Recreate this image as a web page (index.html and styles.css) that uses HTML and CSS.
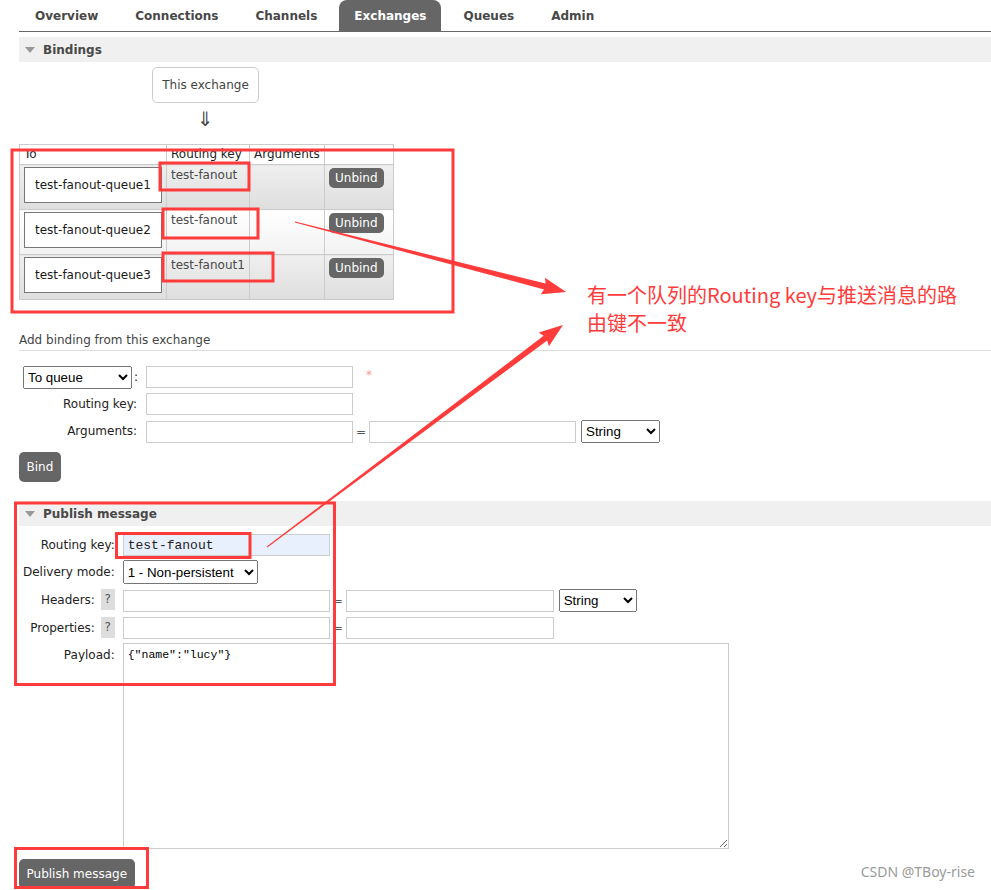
FILE: index.html
```html
<!DOCTYPE html>
<html>
<head>
<meta charset="utf-8">
<link rel="stylesheet" href="styles.css">
</head>
<body>
<div class="page">
  <ul class="tabs">
    <li><a>Overview</a></li>
    <li><a>Connections</a></li>
    <li><a>Channels</a></li>
    <li class="active"><a>Exchanges</a></li>
    <li><a>Queues</a></li>
    <li><a>Admin</a></li>
  </ul>

  <div class="section">
    <h2 class="section-head"><span class="tri"></span>Bindings</h2>
    <div class="this-ex">This exchange</div>
    <div class="down">⇓</div>
    <table class="bindings">
      <thead>
        <tr><th class="c1">To</th><th class="c2">Routing key</th><th class="c3">Arguments</th><th class="c4"></th></tr>
      </thead>
      <tbody>
        <tr class="alt1"><td><span class="queue">test-fanout-queue1</span></td><td class="rk">test-fanout</td><td></td><td><button class="small-btn">Unbind</button></td></tr>
        <tr class="alt2"><td><span class="queue">test-fanout-queue2</span></td><td class="rk">test-fanout</td><td></td><td><button class="small-btn">Unbind</button></td></tr>
        <tr class="alt1"><td><span class="queue">test-fanout-queue3</span></td><td class="rk">test-fanout1</td><td></td><td><button class="small-btn">Unbind</button></td></tr>
      </tbody>
    </table>

    <h3 class="sub">Add binding from this exchange</h3>
    <div class="form bind-form">
      <div class="lbl"><select class="sel-dest"><option>To queue</option></select>:</div>
      <div class="fld"><input type="text"><span class="req">*</span></div>
      <div class="lbl">Routing key:</div>
      <div class="fld"><input type="text"></div>
      <div class="lbl">Arguments:</div>
      <div class="fld"><input type="text"><span class="eq">=</span><input type="text"><select class="sel-type"><option>String</option></select></div>
    </div>
    <button class="btn">Bind</button>
  </div>

  <div class="section">
    <h2 class="section-head"><span class="tri"></span>Publish message</h2>
    <div class="form pub-form">
      <div class="lbl">Routing key:</div>
      <div class="fld"><input type="text" class="filled" value="test-fanout"></div>
      <div class="lbl">Delivery mode:</div>
      <div class="fld"><select class="sel-mode"><option>1 - Non-persistent</option></select></div>
      <div class="lbl">Headers: <span class="help">?</span></div>
      <div class="fld"><input type="text"><span class="eq">=</span><input type="text" class="wide"><select class="sel-type2"><option>String</option></select></div>
      <div class="lbl">Properties: <span class="help">?</span></div>
      <div class="fld"><input type="text"><span class="eq">=</span><input type="text" class="wide"></div>
      <div class="lbl top">Payload:</div>
      <div class="fld"><textarea class="payload">{"name":"lucy"}</textarea></div>
    </div>
    <button class="btn">Publish message</button>
  </div>
</div>

<svg class="marks" width="991" height="890" viewBox="0 0 991 890">
  <g fill="none" stroke="#ff3b3b" stroke-width="3">
    <rect x="12" y="150" width="441" height="162"/>
    <rect x="160" y="163" width="89" height="27"/>
    <rect x="163" y="209" width="95" height="29"/>
    <rect x="163" y="253" width="110" height="28"/>
    <rect x="15.5" y="503" width="319" height="181.5"/>
    <rect x="116.5" y="533.5" width="133.5" height="24"/>
    <rect x="15.5" y="848.5" width="132" height="39"/>
  </g>
  <g fill="#ff3b3b">
    <g transform="translate(295 222) rotate(14.48)">
      <polygon points="0,-0.5 258,-3 256,-8.5 280,0 256,8.5 258,3 0,0.5"/>
    </g>
    <g transform="translate(267 547) rotate(-36.87)">
      <polygon points="0,-0.5 348,-3 346,-8.5 370,0 346,8.5 348,3 0,0.5"/>
    </g>
  </g>
</svg>
<div class="note">有一个队列的Routing key与推送消息的路<br>由键不一致</div>
<div class="watermark">CSDN @TBoy-rise</div>
</body>
</html>
```

FILE: styles.css
```css
html, body {
  margin: 0;
  padding: 0;
  width: 991px;
  height: 890px;
  overflow: hidden;
  background: #fff;
}
body {
  position: relative;
  font-family: "DejaVu Sans", Verdana, sans-serif;
  font-size: 12px;
  color: #484848;
}
.page {
  padding-left: 19px;
}

/* tabs */
.tabs {
  list-style: none;
  margin: 0;
  padding: 0 0 0 1px;
  display: flex;
  gap: 7px;
  height: 31px;
  border-bottom: 1px solid #666;
}
.tabs li a {
  display: block;
  padding: 1px 15px 0;
  line-height: 30px;
  font-weight: bold;
  color: #484848;
}
.tabs li.active a {
  background: #666;
  color: #fff;
  border-radius: 8px 8px 0 0;
}

/* sections */
.section-head {
  margin: 5px 0 0;
  height: 24px;
  padding-top: 1px;
  line-height: 24px;
  background: #f0f0f0;
  font-size: 12px;
  font-weight: bold;
  color: #484848;
  padding-left: 6px;
  display: flex;
  align-items: center;
}
.tri {
  width: 0;
  height: 0;
  border-left: 5.5px solid transparent;
  border-right: 5.5px solid transparent;
  border-top: 6px solid #999;
  margin-right: 8px;
}
.this-ex {
  margin: 5px 0 0 133px;
  width: 107px;
  height: 36px;
  box-sizing: border-box;
  border: 1px solid #ccc;
  border-radius: 5px;
  padding-top: 1px;
  line-height: 33px;
  text-align: center;
  color: #444;
}
.down {
  margin-left: 133px;
  width: 107px;
  height: 41px;
  box-sizing: border-box;
  padding-top: 5px;
  text-align: center;
  font-size: 20px;
  line-height: 22px;
  color: #444;
}

/* bindings table */
.bindings {
  border-collapse: collapse;
  table-layout: fixed;
  width: 375px;
}
.bindings th, .bindings td {
  border: 1px solid #ccc;
  text-align: left;
  vertical-align: top;
}
.bindings th {
  font-weight: normal;
  color: #222;
  height: 19px;
  padding: 0 4px;
  line-height: 19px;
  background: #fff;
  vertical-align: middle;
}
.bindings .c1 { width: 138px; }
.bindings .c2 { width: 74px; }
.bindings .c3 { width: 66px; }
.bindings .c4 { width: 60px; }
.bindings td {
  height: 39px;
  padding: 2px 4px;
  line-height: 14px;
}
.bindings tr.alt1 td {
  background: linear-gradient(#efefef, #dedede);
}
.bindings tr.alt2 td {
  background: linear-gradient(#ffffff, #f2f2f2);
}
.bindings td.rk {
  color: #4a4a4a;
  padding-top: 3px;
}
.queue {
  display: block;
  width: fit-content;
  padding: 10px;
  border: 1px solid #777;
  background: #fff;
  color: #1a1a1a;
  line-height: 14px;
}
.small-btn {
  display: block;
  margin-top: 1px;
  font-family: "DejaVu Sans", Verdana, sans-serif;
  font-size: 12px;
  line-height: 14px;
  padding: 3px 6px;
  border: 0;
  border-radius: 5px;
  background: #666;
  color: #fff;
}

/* sub heading */
.sub {
  margin: 33px 0 0;
  font-size: 12px;
  font-weight: normal;
  line-height: 14px;
  padding-bottom: 3px;
  border-bottom: 1px solid #ddd;
  color: #444;
}

/* forms */
.form {
  display: grid;
  align-items: start;
  justify-content: start;
  row-gap: 0;
}
.bind-form {
  margin-top: 15px;
  grid-template-columns: 118px auto;
  grid-template-rows: 27px 27px 23px;
  column-gap: 9px;
}
.pub-form {
  margin-top: 8px;
  grid-template-columns: auto auto;
  grid-template-rows: 26px 29px 28px 26px 206px;
  column-gap: 8px;
}
.lbl {
  text-align: right;
  color: #222;
  padding-left: 4px;
  white-space: nowrap;
  line-height: 22px;
}
.pub-form .lbl:nth-child(3) {
  line-height: 24px;
}
.lbl.top {
  line-height: 14px;
  padding-top: 5px;
}
.fld {
  display: flex;
  align-items: center;
  gap: 3px;
}
input[type=text] {
  box-sizing: border-box;
  width: 207px;
  height: 22px;
  margin: 0;
  border: 1px solid #ccc;
  padding: 0 4px;
  font-family: "DejaVu Sans", sans-serif;
  font-size: 12px;
  outline: none;
}
input.wide {
  width: 208px;
}
input.filled {
  background: #e8f0fe;
  font-family: "Liberation Mono", monospace;
  font-size: 13px;
  color: #222;
}
.eq {
  width: 10px;
  text-align: center;
  color: #555;
}
.req {
  margin-left: 10px;
  color: #f99;
  margin-top: -4px;
}
select {
  font-family: "Liberation Sans", Arial, sans-serif;
  font-size: 13.33px;
  color: #000;
  margin: 0;
  box-sizing: border-box;
  vertical-align: middle;
}
.sel-dest {
  width: 109px;
  height: 23px;
  margin-right: 2px;
}
.sel-type {
  width: 79px;
  height: 23px;
  margin-left: 2px;
}
.sel-type2 {
  width: 78px;
  height: 23px;
  margin-left: 2px;
}
.sel-mode {
  width: 135px;
  height: 24px;
}
.help {
  display: inline-block;
  width: 14px;
  height: 21px;
  line-height: 21px;
  margin-left: 2px;
  text-align: center;
  background: #ddd;
  color: #555;
  vertical-align: top;
}
.payload {
  box-sizing: border-box;
  width: 606px;
  height: 206px;
  margin: 0;
  border: 1px solid #ccc;
  padding: 4px;
  font-family: "Liberation Mono", monospace;
  font-size: 11.5px;
  color: #000;
  outline: none;
}

/* buttons */
.btn {
  display: block;
  margin-top: 10px;
  font-family: "DejaVu Sans", Verdana, sans-serif;
  font-size: 12px;
  line-height: 14px;
  padding: 8px 7.5px;
  border: 0;
  border-radius: 5px;
  background: #666;
  color: #fff;
}
.bind-form + .btn {
  margin-top: 9px;
}
.section + .section .section-head {
  margin-top: 19px;
}

/* annotations (overlay) */
.marks {
  position: absolute;
  left: 0;
  top: 0;
  pointer-events: none;
}
.note {
  position: absolute;
  left: 587px;
  top: 281px;
  font-family: "Noto Sans CJK SC", sans-serif;
  font-size: 20px;
  line-height: 28px;
  color: #ff3b3b;
  white-space: nowrap;
}
.watermark {
  position: absolute;
  right: 16px;
  top: 862px;
  font-family: "Noto Sans", sans-serif;
  font-size: 14px;
  line-height: 20px;
  color: #9a9a9a;
}
```
